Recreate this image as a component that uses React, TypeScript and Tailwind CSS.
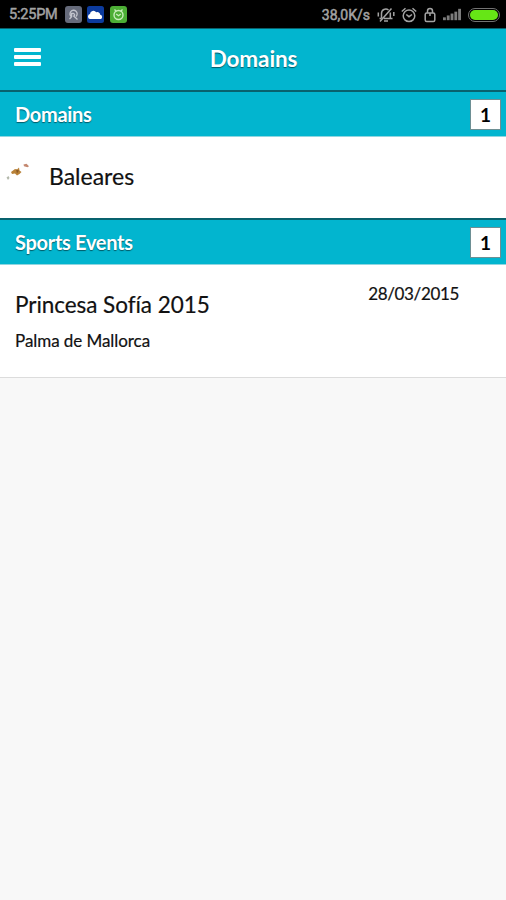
import type { ReactNode } from 'react'

const domains = [{ name: 'Baleares' }]

const events = [{ name: 'Princesa Sofía 2015', place: 'Palma de Mallorca', date: '28/03/2015' }]

const signalBars = [
  { x: 0, h: 3 },
  { x: 4, h: 5 },
  { x: 8, h: 7 },
  { x: 12, h: 9 },
  { x: 16, h: 12 },
]

function StatusBar() {
  return (
    <div className="flex h-7 items-center bg-black pl-[9px] pr-[6px] pt-[2px] font-[Roboto,sans-serif] text-[#a3a3a3]">
      <span className="w-[56px] whitespace-nowrap pt-px text-[14.5px] leading-none tracking-[-0.2px] [-webkit-text-stroke:0.5px]">5:25PM</span>
      {/* App notifications */}
      <svg width="17" height="17" viewBox="0 0 17 17" fill="none" className="-mt-px shrink-0">
        <rect width="17" height="17" rx="3" fill="#666b7b" />
        <path d="M4.500 13l2-2.200a3.600 3.600 0 1 1 4.500-.3M6.500 10.800V7.500h2.200a1.300 1.300 0 0 1 0 2.500l3.800 3.500" stroke="#c3c5cd" strokeWidth="1.300" />
      </svg>
      <svg width="17" height="17" viewBox="0 0 17 17" className="-mt-px ml-[5px] shrink-0">
        <rect width="17" height="17" rx="2.500" fill="#0c3b9e" />
        <path d="M2.800 13a2.600 2.600 0 0 1 .2-5 3.400 3.400 0 0 1 6.200-1.700 2.800 2.800 0 0 1 4 2.500 2.200 2.200 0 0 1 .6 4.200z" fill="#fff" />
      </svg>
      <svg width="17" height="17" viewBox="0 0 17 17" fill="none" className="-mt-px ml-[6px] shrink-0">
        <rect width="17" height="17" rx="3" fill="#4cae35" />
        <circle cx="8.500" cy="9" r="4.500" stroke="#c8eeba" strokeWidth="1.400" />
        <path d="M4.500 3.500l2 2M12.500 3.500l-2 2M6.200 8l2.300 1.700L10.800 8" stroke="#c8eeba" strokeWidth="1.300" />
      </svg>

      <span className="ml-auto whitespace-nowrap text-[14px] leading-none [-webkit-text-stroke:0.5px]">38,0K/s</span>
      {/* Muted bell */}
      <svg width="18" height="16" viewBox="0 0 18 16" fill="none" stroke="#a3a3a3" strokeWidth="1.500" className="-mt-px ml-[7px] shrink-0">
        <path d="M4.500 11V6.500A4.300 4.300 0 0 1 11.500 3M13.300 5.500v6H7M2.500 11.500h2M13.300 11.500h2.200M7 14h4M3 14.500L14.500 1.500M1.300 5.500v4M16.800 5v4" />
      </svg>
      {/* Alarm */}
      <svg width="16" height="16" viewBox="0 0 16 16" fill="none" stroke="#a3a3a3" strokeWidth="1.500" className="-mt-px ml-[6px] shrink-0">
        <circle cx="8" cy="8.800" r="5.800" />
        <path d="M.8 4.500L4.500 1.200M15.200 4.500L11.500 1.200M5.300 7.500L8 9.700l3-2.200" />
      </svg>
      {/* Lock */}
      <svg width="12" height="16" viewBox="0 0 12 16" fill="none" stroke="#a3a3a3" strokeWidth="1.500" className="-mt-px ml-[7px] shrink-0">
        <rect x="1.200" y="6" width="9.600" height="8.500" rx="1.500" />
        <path d="M3.500 6V4a2.500 2.500 0 0 1 5 0v2M6 6v3" />
      </svg>
      <svg width="18" height="13" viewBox="0 0 19 13" fill="#7c7c7c" className="-mt-px ml-[7px] shrink-0">
        {signalBars.map((b) => (
          <rect key={b.x} x={b.x} y={12.5 - b.h} width="3" height={b.h} />
        ))}
      </svg>
      <div className="-mt-px ml-[7px] flex h-[14px] w-[32px] shrink-0 rounded-full border border-[#737373] p-[1px]">
        <div className="flex-1 rounded-full bg-[#66e616]" />
      </div>
    </div>
  )
}

function SectionHeader({ title, count }: { title: string; count: number }) {
  return (
    <div className="flex h-[47px] items-center justify-between border-b border-t-2 border-b-[#8fd6e0] border-t-[#08626e] bg-[#02b5cf] pl-[15px] pr-[5px]">
      <h2 className="-mt-px text-[20px] font-bold leading-none tracking-[-0.3px] text-white [text-shadow:0_1px_1px_#00000080]">{title}</h2>
      <span className="flex h-[31px] w-[31px] items-center justify-center border border-[#6d8f94] bg-white text-[19px] font-bold leading-none text-black">
        {count}
      </span>
    </div>
  )
}

function Row({ className, children }: { className: string; children: ReactNode }) {
  return <div className={`flex bg-white text-[#111] [font-variant-ligatures:none] [-webkit-text-stroke:0.2px] ${className}`}>{children}</div>
}

export default function App() {
  return (
    <div className="h-[900px] w-[506px] overflow-hidden bg-[#f8f8f8] font-[Lato,sans-serif]">
      <StatusBar />

      <header className="grid h-[62px] grid-cols-[60px_1fr_60px] items-center border-t border-[#08626e] bg-[#02b5cf] pb-[4px]">
        <button className="-mt-px ml-[14px] flex w-[27px] flex-col gap-[3px]" aria-label="Menu">
          <span className="h-[4px] w-full rounded-[1px] bg-white" />
          <span className="h-[4px] w-full rounded-[1px] bg-white" />
          <span className="h-[4px] w-full rounded-[1px] bg-white" />
        </button>
        <h1 className="pl-px pt-[3px] text-center text-[22.5px] font-bold leading-none tracking-[-0.1px] text-white [text-shadow:0_1px_1px_#00000080]">Domains</h1>
      </header>

      <SectionHeader title="Domains" count={domains.length} />
      {domains.map((d) => (
        <Row key={d.name} className="h-[81px] items-center pb-[3px] pl-[6px]">
          {/* Islands */}
          <svg width="26" height="24" viewBox="0 0 26 24" className="-mt-[9px] shrink-0">
            <path d="M5 12l4-3 2 .500 2-2 .500 3 2 1.500-2 2-2.500 1.500-2-2-3 .500z" fill="#b98238" />
            <path d="M10 9.500l3 1-2 3z" fill="#8a5a25" />
            <path d="M17.500 4.500l3-.800 2.500 2.500-1.500 1-3.500-1z" fill="#c48870" />
            <path d="M.500 17.500l2-1.500 1 2-1.500 2zM2 20.500l1.500.500" fill="#b4b9ac" />
          </svg>
          <span className="ml-[17px] text-[23px] leading-none">{d.name}</span>
        </Row>
      ))}

      <SectionHeader title="Sports Events" count={events.length} />
      {events.map((e) => (
        <Row key={e.name} className="h-[113px] justify-between border-b border-[#dcdcdc] pl-[15px] pr-[47px]">
          <div className="pt-[29px]">
            <p className="text-[22.5px] leading-[22px] tracking-[-0.05px]">{e.name}</p>
            <p className="mt-[16px] text-[17px] leading-[17px] tracking-[-0.06px]">{e.place}</p>
          </div>
          <p className="pt-[20px] text-[17px] leading-[17px] tracking-[-0.35px]">{e.date}</p>
        </Row>
      ))}
    </div>
  )
}
